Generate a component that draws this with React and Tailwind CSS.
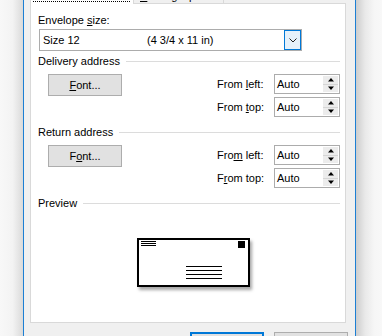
import React from 'react';

const SpinArrows = () => (
  <div className="flex w-[15px] shrink-0 flex-col py-[1px] mr-[1px]">
    <div className="flex flex-1 items-center justify-center bg-[#ececec]">
      <svg width="6" height="4" viewBox="0 0 6 4">
        <polygon points="3,0 6,3.5 0,3.5" fill="#000" />
      </svg>
    </div>
    <div className="h-px bg-[#d6d6d6]" />
    <div className="flex flex-1 items-center justify-center bg-[#ececec]">
      <svg width="6" height="4" viewBox="0 0 6 4">
        <polygon points="0,0.5 6,0.5 3,4" fill="#000" />
      </svg>
    </div>
  </div>
);

const SpinBox = ({ value }) => (
  <div className="flex h-[20px] w-[66px] border border-[#acacac] bg-white">
    <span className="flex flex-1 items-center pl-[2px]">{value}</span>
    <SpinArrows />
  </div>
);

const Heading = ({ children }) => (
  <div className="flex h-[14px] items-center">
    <span className="leading-[14px]">{children}</span>
    <div className="ml-[6px] h-px flex-1 bg-[#dcdcdc]" />
  </div>
);

const AddressRow = ({ font, left, top }) => (
  <div className="mt-[6px] flex items-start justify-between">
    <button className="ml-[10px] h-[22px] w-[74px] border border-[#adadad] bg-[#e1e1e1] text-center leading-[20px]">
      {font}
    </button>
    <div className="grid grid-cols-[57px_66px] items-center gap-y-[3px]">
      <span>{left}</span>
      <SpinBox value="Auto" />
      <span>{top}</span>
      <SpinBox value="Auto" />
    </div>
  </div>
);

const Envelope = () => (
  <div className="ml-[99px] mt-[28px] w-[113px] shadow-[2px_3px_3px_rgba(0,0,0,0.35)]">
    <svg width="113" height="49" viewBox="0 0 113 49" className="block">
      <rect x="1" y="1" width="111" height="47" fill="#fff" stroke="#000" strokeWidth="2" />
      <rect x="4" y="3" width="15" height="1" fill="#000" />
      <rect x="4" y="5" width="15" height="1" fill="#000" />
      <rect x="4" y="7" width="15" height="1" fill="#000" />
      <rect x="101" y="3" width="7" height="7" fill="#000" />
      <rect x="49" y="28" width="36" height="1" fill="#000" />
      <rect x="49" y="32" width="36" height="1" fill="#000" />
      <rect x="49" y="36" width="36" height="1" fill="#000" />
      <rect x="49" y="40" width="36" height="1" fill="#000" />
    </svg>
  </div>
);

export default function App() {
  return (
    <div className="flex h-[336px] w-[382px] overflow-hidden bg-[#f7f7f7] font-['Liberation_Sans',Arial,sans-serif] text-[11px] text-black">
      {/* backdrop left of the window */}
      <div className="w-[23px] shrink-0 bg-[linear-gradient(to_right,#f8f8f8_0%,#f3f3f3_55%,#dadada_100%)]" />

      {/* dialog, its tab captions run off the top edge */}
      <div className="-mt-[20px] h-[400px] w-[333px] shrink-0 border-x border-[#1c7fd4] bg-[#f0f0f0] pl-[6px] pr-[9px]">
        {/* tabs */}
        <div className="flex h-[23px] items-start">
          <div className="relative z-10 flex h-[24px] w-[104px] items-end border-x border-t border-[#d9d9d9] bg-white pb-[2px] pl-[2px]">
            <div className="flex h-[15px] w-[97px] items-center justify-center border border-dotted border-black">
              Envelope Options
            </div>
          </div>
          <div className="mt-[2px] h-[21px] w-[90px] border-r border-t border-[#d9d9d9] bg-[#f0f0f0] pl-[6px] pt-[6px] leading-[14px]">
            <u>P</u>rinting Options
          </div>
        </div>

        {/* tab panel */}
        <div className="h-[320px] w-[316px] border border-[#d9d9d9] bg-white pl-[7px] pr-[5px]">
          <div className="mt-[8px] h-[16px] leading-[16px]">
            Envelope <u>s</u>ize:
          </div>
          <div className="ml-[1px] mt-[1px] flex h-[22px] w-[263px] border border-[#acacac] bg-white">
            <div className="flex flex-1 items-center pl-[3px]">
              <span className="w-[104px]">Size 12</span>
              <span>(4 3/4 x 11 in)</span>
            </div>
            <div className="flex h-full w-[17px] items-center justify-center border border-[#0078d7] bg-[#e5f1fb]">
              <svg width="8" height="5" viewBox="0 0 8 5">
                <polyline points="0.5,0.5 4,4 7.5,0.5" fill="none" stroke="#222" strokeWidth="1" />
              </svg>
            </div>
          </div>

          <div className="mt-[3px]">
            <Heading>Delivery address</Heading>
          </div>
          <AddressRow
            font={<><u>F</u>ont...</>}
            left={<>From <u>l</u>eft:</>}
            top={<>From <u>t</u>op:</>}
          />

          <div className="mt-[8px]">
            <Heading>Return address</Heading>
          </div>
          <AddressRow
            font={<>F<u>o</u>nt...</>}
            left={<>Fro<u>m</u> left:</>}
            top={<>F<u>r</u>om top:</>}
          />

          <div className="mt-[8px]">
            <Heading>Preview</Heading>
          </div>
          <Envelope />
        </div>

        {/* dialog buttons */}
        <div className="-mr-[2px] mt-[9px] flex justify-end gap-[10px]">
          <button className="h-[23px] w-[74px] border-2 border-[#0078d7] bg-[#e1e1e1]">OK</button>
          <button className="h-[23px] w-[74px] border border-[#adadad] bg-[#e1e1e1]">Cancel</button>
        </div>
      </div>

      {/* window shadow on the right */}
      <div className="flex-1 bg-[linear-gradient(to_right,#cdcdcd_0%,#e9e9e9_35%,#f6f6f6_70%,#f8f8f8_100%)]" />
    </div>
  );
}
